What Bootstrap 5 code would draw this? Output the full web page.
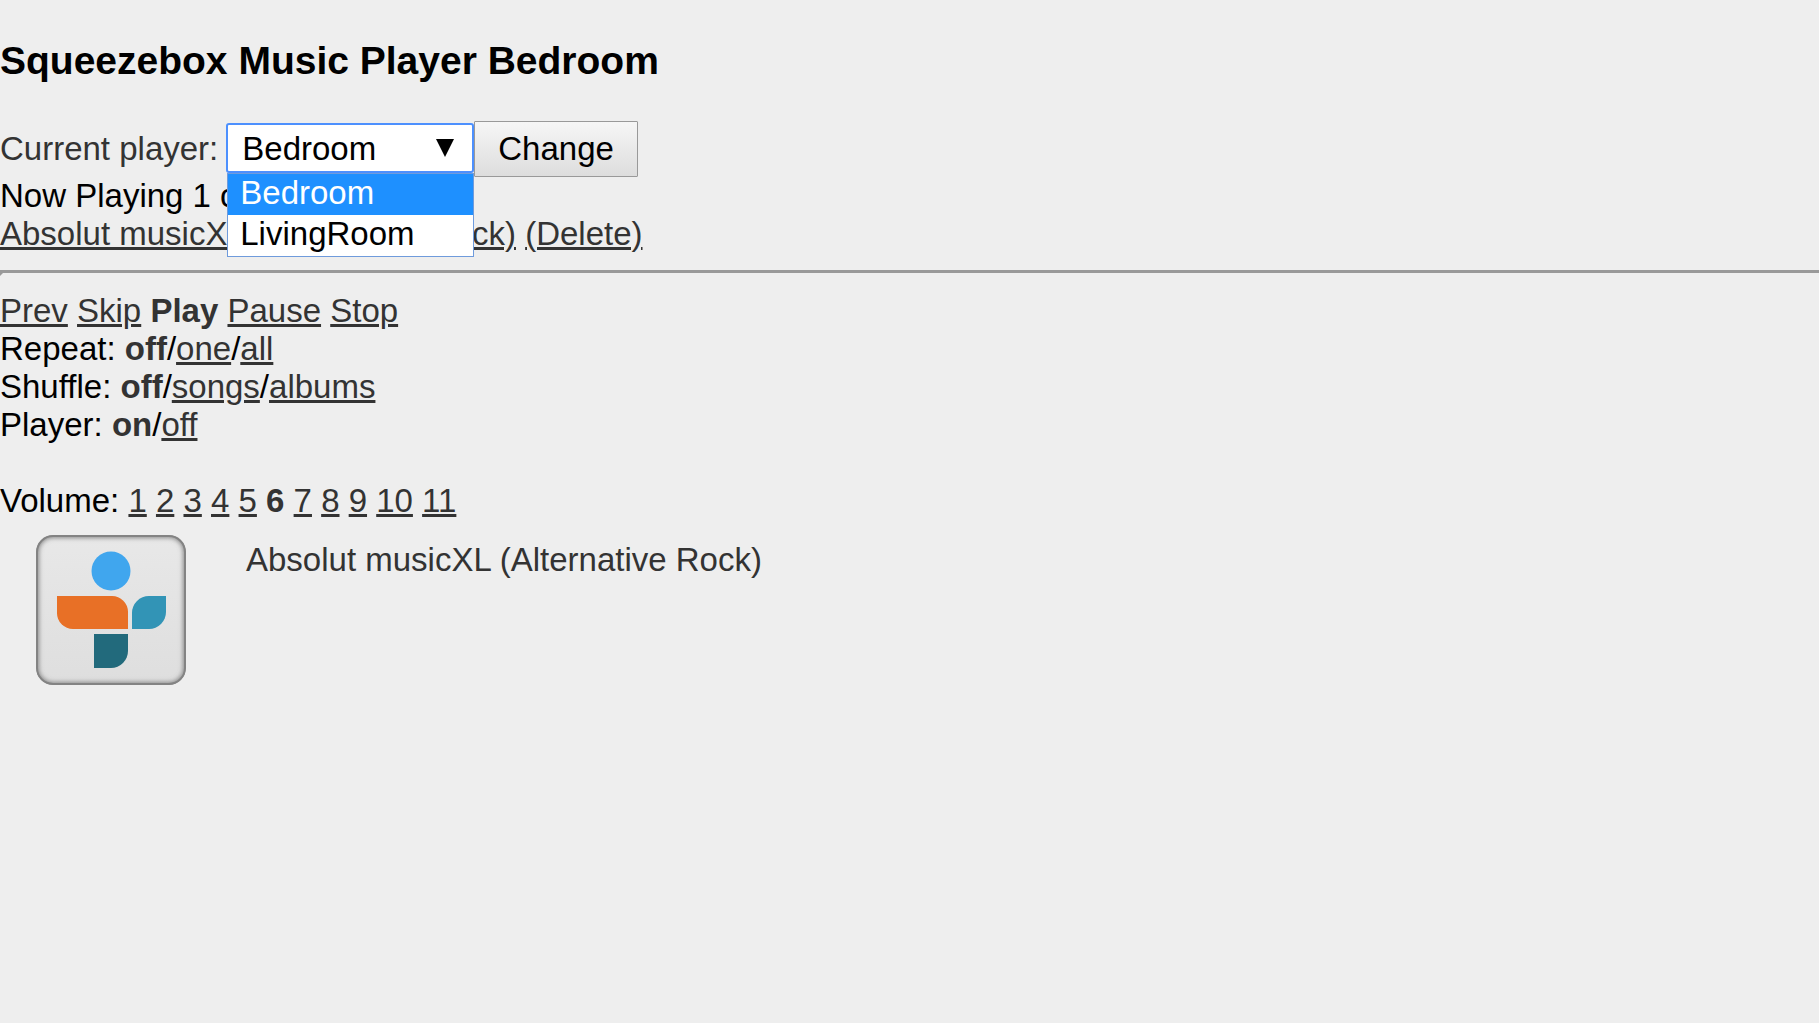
<!DOCTYPE html>
<html lang="en">
<head>
<meta charset="utf-8">
<meta name="viewport" content="width=device-width, initial-scale=1">
<title>Squeezebox Music Player Bedroom</title>
<link href="https://cdn.jsdelivr.net/npm/bootstrap@5.3.0/dist/css/bootstrap.min.css" rel="stylesheet">
<style>
  body { background: #eee; color: #000; font: 33px/38px "Liberation Sans", Arial, sans-serif; }
  a, b, .dim { color: #333; }
  a { text-decoration-thickness: 3px; }
  a:hover { color: #000; }
  .page-title { font-size: 39px; line-height: 45px; font-weight: 700; padding-top: 38px; margin-bottom: 38px; }
  .player-select {
    width: 248px; height: 50px; margin-bottom: 2px; padding: 2px 44px 0 14px; font: inherit; color: #000;
    background-color: #fff; border: 2px solid #4d90fe; border-radius: 3px;
    background-image: url("data:image/svg+xml,%3Csvg xmlns='http://www.w3.org/2000/svg' viewBox='0 0 18 18'%3E%3Cpath d='M0 0h18L9 18z'/%3E%3C/svg%3E");
    background-size: 18px 18px; background-position: right 18px top 14px;
  }
  .player-menu { top: 50px; left: 1px; right: 0; z-index: 5; border: 1px solid #6f9bdc; border-radius: 0; background: #fff; }
  .player-menu li { padding: 0 12px 3px; border: 0; color: #000; background: #fff; }
  .player-menu li.active { margin: 0; color: #fff; background: #1e90ff; }
  .change-btn {
    height: 56px; padding: 0 23px; font: inherit; color: #000;
    border: 1px solid #999; border-radius: 1px; background: linear-gradient(#f6f6f6, #ddd);
  }
  .divider { height: 6px; margin: 17px 0 16px; opacity: 1; border: 3px solid #999; border-right: 0; border-bottom-color: #eee; }
  .station { padding: 15px 36px; gap: 60px; }
  .station-name { padding-top: 6px; }
</style>
</head>
<body>
<h1 class="page-title">Squeezebox Music Player Bedroom</h1>

<form class="d-flex align-items-center" onsubmit="return false">
  <label for="player" class="dim me-2">Current player:</label>
  <div class="position-relative">
    <select id="player" class="form-select player-select">
      <option selected>Bedroom</option>
      <option>LivingRoom</option>
    </select>
    <ul class="list-group position-absolute player-menu" role="listbox" aria-label="Players">
      <li class="list-group-item active" role="option" aria-selected="true">Bedroom</li>
      <li class="list-group-item" role="option" aria-selected="false">LivingRoom</li>
    </ul>
  </div>
  <button type="submit" class="btn change-btn">Change</button>
</form>

<div>Now Playing 1 of 1</div>
<div><a href="#">Absolut musicXL (Alternative Rock)</a> <a href="#">(Delete)</a></div>
<hr class="divider">

<div><a href="#">Prev</a> <a href="#">Skip</a> <b>Play</b> <a href="#">Pause</a> <a href="#">Stop</a></div>
<div>Repeat: <b>off</b>/<a href="#">one</a>/<a href="#">all</a></div>
<div>Shuffle: <b>off</b>/<a href="#">songs</a>/<a href="#">albums</a></div>
<div>Player: <b>on</b>/<a href="#">off</a></div>
<br>
<div>Volume: <a href="#">1</a> <a href="#">2</a> <a href="#">3</a> <a href="#">4</a> <a href="#">5</a> <b>6</b> <a href="#">7</a> <a href="#">8</a> <a href="#">9</a> <a href="#">10</a> <a href="#">11</a></div>

<div class="d-flex station">
  <svg class="flex-shrink-0" width="150" height="150" viewBox="0 0 150 150" role="img" aria-label="Station logo">
    <defs>
      <linearGradient id="face" x1="0" y1="0" x2="0" y2="1"><stop offset="0" stop-color="#e8e8e8"/><stop offset="1" stop-color="#dedede"/></linearGradient>
      <filter id="soft" x="-10%" y="-10%" width="120%" height="120%"><feGaussianBlur stdDeviation="2.5"/></filter>
      <filter id="edge" x="-10%" y="-10%" width="120%" height="120%"><feGaussianBlur stdDeviation="0.7"/></filter>
      <clipPath id="tile"><rect width="150" height="150" rx="17"/></clipPath>
    </defs>
    <g clip-path="url(#tile)">
      <rect width="150" height="150" fill="url(#face)"/>
      <rect x="0" y="0" width="150" height="150" rx="17" fill="none" stroke="#777" stroke-width="5" filter="url(#soft)"/>
      <rect x="1" y="1" width="148" height="148" rx="16" fill="none" stroke="#838383" stroke-width="2"/>
    </g>
    <g filter="url(#edge)">
      <circle cx="75" cy="36" r="19.5" fill="#41a6ee"/>
      <path d="M21 61H76A16 16 0 0 1 92 77V94H37A16 16 0 0 1 21 78Z" fill="#e87025"/>
      <path d="M96 94V78A17 17 0 0 1 113 61H130V77A17 17 0 0 1 113 94Z" fill="#3194b6"/>
      <path d="M58 99H92V116A17 17 0 0 1 75 133H58Z" fill="#246a7b"/>
    </g>
  </svg>
  <div class="dim station-name">Absolut musicXL (Alternative Rock)</div>
</div>
<script src="https://cdn.jsdelivr.net/npm/bootstrap@5.3.0/dist/js/bootstrap.bundle.min.js"></script>
</body>
</html>
